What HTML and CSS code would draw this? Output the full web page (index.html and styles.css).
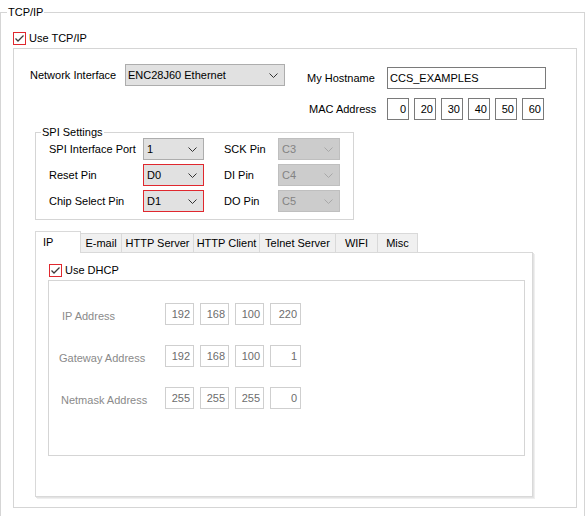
FILE: index.html
```html
<!DOCTYPE html>
<html>
<head>
<meta charset="utf-8">
<link rel="stylesheet" href="styles.css">
</head>
<body>
<fieldset class="tcp">
  <legend class="lg">TCP/IP</legend>
  <div class="check">
    <svg class="cb" width="13" height="13" viewBox="0 0 13 13"><rect x="0.5" y="0.5" width="12" height="12" fill="#fff" stroke="#e0282e"/><polyline points="2.5,6.5 5,9 10.5,3.5" fill="none" stroke="#3c3c3c" stroke-width="1.3"/></svg>
    <span>Use TCP/IP</span>
  </div>
  <div class="inner">
    <div class="top">
      <div class="ni">
        <span class="lbl-ni">Network Interface</span>
        <div class="select wide"><span>ENC28J60 Ethernet</span><svg width="9" height="5" viewBox="0 0 9 5"><polyline points="0.5,0.5 4.5,4.5 8.5,0.5" fill="none" stroke="#333"/></svg></div>
      </div>
      <div class="right">
        <div class="row">
          <span class="lbl-r">My Hostname</span>
          <div class="input">CCS_EXAMPLES</div>
        </div>
        <div class="row mac">
          <span class="lbl-r lbl-mac">MAC Address</span>
          <div class="octets">
            <div class="oct">0</div><div class="oct">20</div><div class="oct">30</div><div class="oct">40</div><div class="oct">50</div><div class="oct">60</div>
          </div>
        </div>
      </div>
    </div>

    <fieldset class="spi">
      <legend class="lg lg-spi">SPI Settings</legend>
      <div class="spi-grid">
        <span>SPI Interface Port</span>
        <div class="select small"><span>1</span><svg width="9" height="5" viewBox="0 0 9 5"><polyline points="0.5,0.5 4.5,4.5 8.5,0.5" fill="none" stroke="#333"/></svg></div>
        <span>SCK Pin</span>
        <div class="select small2 disabled"><span>C3</span><svg width="9" height="5" viewBox="0 0 9 5"><polyline points="0.5,0.5 4.5,4.5 8.5,0.5" fill="none" stroke="#a8a8a8"/></svg></div>

        <span>Reset Pin</span>
        <div class="select small err"><span>D0</span><svg width="9" height="5" viewBox="0 0 9 5"><polyline points="0.5,0.5 4.5,4.5 8.5,0.5" fill="none" stroke="#333"/></svg></div>
        <span>DI Pin</span>
        <div class="select small2 disabled"><span>C4</span><svg width="9" height="5" viewBox="0 0 9 5"><polyline points="0.5,0.5 4.5,4.5 8.5,0.5" fill="none" stroke="#a8a8a8"/></svg></div>

        <span>Chip Select Pin</span>
        <div class="select small err"><span>D1</span><svg width="9" height="5" viewBox="0 0 9 5"><polyline points="0.5,0.5 4.5,4.5 8.5,0.5" fill="none" stroke="#333"/></svg></div>
        <span>DO Pin</span>
        <div class="select small2 disabled"><span>C5</span><svg width="9" height="5" viewBox="0 0 9 5"><polyline points="0.5,0.5 4.5,4.5 8.5,0.5" fill="none" stroke="#a8a8a8"/></svg></div>
      </div>
    </fieldset>

    <div class="tabs">
      <div class="tab active t-ip">IP</div>
      <div class="tab t-mail">E-mail</div>
      <div class="tab t-hs">HTTP Server</div>
      <div class="tab t-hc">HTTP Client</div>
      <div class="tab t-tel">Telnet Server</div>
      <div class="tab t-wifi">WIFI</div>
      <div class="tab t-misc">Misc</div>
    </div>
    <div class="panel">
      <div class="check dhcp">
        <svg class="cb" width="13" height="13" viewBox="0 0 13 13"><rect x="0.5" y="0.5" width="12" height="12" fill="#fff" stroke="#e0282e"/><polyline points="2.5,6.5 5,9 10.5,3.5" fill="none" stroke="#3c3c3c" stroke-width="1.3"/></svg>
        <span>Use DHCP</span>
      </div>
      <div class="group">
        <div class="iprow">
          <span class="iplbl l-ip">IP Address</span>
          <div class="oct4"><div class="ipb">192</div><div class="ipb">168</div><div class="ipb">100</div><div class="ipb last">220</div></div>
        </div>
        <div class="iprow">
          <span class="iplbl">Gateway Address</span>
          <div class="oct4"><div class="ipb">192</div><div class="ipb">168</div><div class="ipb">100</div><div class="ipb last">1</div></div>
        </div>
        <div class="iprow">
          <span class="iplbl l-nm">Netmask Address</span>
          <div class="oct4"><div class="ipb">255</div><div class="ipb">255</div><div class="ipb">255</div><div class="ipb last">0</div></div>
        </div>
      </div>
    </div>
  </div>
</fieldset>
</body>
</html>
```
FILE: styles.css
```css
html, body {
  margin: 0;
  padding: 0;
  background: #fff;
}
body {
  font-family: "Liberation Sans", Arial, sans-serif;
  font-size: 11px;
  color: #000;
  overflow: hidden;
  height: 516px;
}

.tcp {
  margin: 5px 0 0 0;
  padding: 12px 0 0 6px;
  border: 1px solid #d5d5d5;
  width: 585px;
  height: 560px;
  box-sizing: border-box;
  min-inline-size: 0;
}
.lg {
  padding: 0 1px;
  line-height: 15px;
  font-size: 11px;
}

.check {
  display: flex;
  align-items: center;
  gap: 3px;
  height: 13px;
  line-height: 13px;
  margin-left: 6px;
}
.cb { display: block; flex: none; }

.inner {
  margin: 3px 0 0 6px;
  width: 564px;
  height: 460px;
  box-sizing: border-box;
  border: 1px solid #d5d5d5;
}

.top {
  display: flex;
  margin-top: 15px;
  height: 56px;
}
.ni {
  display: flex;
  align-items: center;
  margin-left: 16px;
  height: 22px;
}
.lbl-ni { width: 95px; }

.select {
  display: flex;
  align-items: center;
  justify-content: space-between;
  box-sizing: border-box;
  height: 22px;
  border: 1px solid #adadad;
  background: #e1e1e1;
  padding: 0 6px 0 2px;
}
.select svg { display: block; flex: none; }
.wide { width: 160px; }
.small { width: 61px; padding-left: 3px; }
.small2 { width: 62px; padding-left: 3px; }
.err { border-color: #e0282e; }
.disabled {
  background: #cccccc;
  border-color: #bfbfbf;
  color: #838383;
}

.right {
  margin-left: 22px;
  margin-top: 3px;
}
.row {
  display: flex;
  align-items: center;
  height: 22px;
}
.row.mac { margin-top: 9px; }
.lbl-r { width: 80px; }
.lbl-mac { width: 78px; margin-left: 2px; }
.input {
  width: 159px;
  height: 22px;
  box-sizing: border-box;
  border: 1px solid #7a7a7a;
  padding-left: 2px;
  line-height: 20px;
}
.octets {
  display: flex;
  gap: 5px;
}
.oct {
  width: 22px;
  height: 22px;
  box-sizing: border-box;
  border: 1px solid #7a7a7a;
  text-align: right;
  padding-right: 2px;
  line-height: 20px;
}

.spi {
  margin: 6px 0 0 21px;
  padding: 0 0 7px 5px;
  width: 319px;
  box-sizing: border-box;
  border: 1px solid #d5d5d5;
  min-inline-size: 0;
}
.lg-spi { line-height: 13px; }
.spi-grid {
  display: grid;
  grid-template-columns: 94px 81px 54px 62px;
  grid-auto-rows: 22px;
  row-gap: 4px;
  align-items: center;
  margin: -1px 0 0 8px;
}

.tabs {
  display: flex;
  align-items: flex-end;
  margin: 11px 0 0 21px;
  height: 21px;
}
.tab {
  box-sizing: border-box;
  height: 19px;
  border: 1px solid #d9d9d9;
  border-bottom: none;
  background: #f0f0f0;
  margin-left: -1px;
  line-height: 18px;
  text-align: center;
}
.tab.active {
  position: relative;
  z-index: 1;
  height: 22px;
  margin-bottom: -1px;
  background: #fff;
  padding-top: 1px;
  text-align: left;
  padding-left: 7px;
}
.t-ip { width: 46px; margin-left: 0; }
.t-mail { width: 42px; }
.t-hs { width: 73px; }
.t-hc { width: 67px; }
.t-tel { width: 77px; }
.t-wifi { width: 43px; }
.t-misc { width: 41px; }

.panel {
  margin-left: 21px;
  width: 498px;
  height: 245px;
  box-sizing: border-box;
  border: 1px solid #d9d9d9;
  box-shadow: 1px 1px 0 #e3e3e3, 2px 2px 0 #efefef;
  padding: 11px 0 0 12px;
}
.dhcp { margin-left: 1px; }
.group {
  margin-top: 3px;
  width: 477px;
  height: 176px;
  box-sizing: border-box;
  border: 1px solid #d5d5d5;
  padding-top: 22px;
  display: flex;
  flex-direction: column;
  gap: 20px;
}
.iprow {
  display: flex;
  align-items: center;
  height: 22px;
  padding-left: 10px;
}
.iplbl {
  width: 106px;
  box-sizing: border-box;
  color: #8a8a8a;
  padding-top: 3px;
}
.l-ip { padding-left: 3px; }
.l-nm { padding-left: 2px; }
.oct4 {
  display: flex;
  gap: 6px;
}
.ipb {
  width: 29px;
  height: 22px;
  box-sizing: border-box;
  border: 1px solid #cfcfcf;
  color: #6d6d6d;
  text-align: right;
  padding-right: 3px;
  line-height: 20px;
}
.ipb.last { width: 31px; }
```
